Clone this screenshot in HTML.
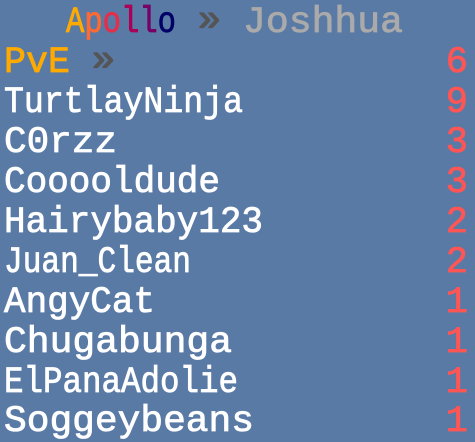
<!DOCTYPE html>
<html><head><style>
html,body{margin:0;padding:0;background:#5a7aa6;width:475px;height:442px;overflow:hidden}
svg{display:block}
text{font-family:"Liberation Mono",monospace;font-size:37px}
</style></head><body>
<svg width="475" height="442" viewBox="0 0 475 442">
<rect width="475" height="442" fill="#5a7aa6"/>
<text x="66" y="32" textLength="110" lengthAdjust="spacingAndGlyphs" stroke-width="0.8"><tspan fill="#ffaa00" stroke="#ffaa00">A</tspan><tspan fill="#ff6a33" stroke="#ff6a33">p</tspan><tspan fill="#e0304d" stroke="#e0304d">o</tspan><tspan fill="#aa0055" stroke="#aa0055">l</tspan><tspan fill="#770066" stroke="#770066">l</tspan><tspan fill="#000066" stroke="#000066">o</tspan></text>
<text x="198" y="30" fill="#555555" stroke="#555555" stroke-width="1.2" font-size="30" textLength="23" lengthAdjust="spacingAndGlyphs">»</text>
<text x="243" y="32" fill="#aaaaaa" stroke="#aaaaaa" stroke-width="0.8" textLength="160" lengthAdjust="spacingAndGlyphs">Joshhua</text>
<text x="4" y="72" fill="#ffaa00" stroke="#ffaa00" stroke-width="0.8" textLength="66" lengthAdjust="spacingAndGlyphs">PvE</text>
<text x="92" y="70" fill="#555555" stroke="#555555" stroke-width="1.2" font-size="30" textLength="23" lengthAdjust="spacingAndGlyphs">»</text>
<g fill="#ffffff" stroke="#ffffff" stroke-width="0.8">
<text x="4" y="112" textLength="239" lengthAdjust="spacingAndGlyphs">TurtlayNinja</text>
<text x="4" y="152" textLength="113" lengthAdjust="spacingAndGlyphs">C0rzz</text>
<text x="4" y="192" textLength="216" lengthAdjust="spacingAndGlyphs">Cooooldude</text>
<text x="4" y="232" textLength="259" lengthAdjust="spacingAndGlyphs">Hairybaby123</text>
<text x="4" y="272" textLength="187" lengthAdjust="spacingAndGlyphs">Juan_Clean</text>
<text x="4" y="312" textLength="151" lengthAdjust="spacingAndGlyphs">AngyCat</text>
<text x="4" y="352" textLength="228" lengthAdjust="spacingAndGlyphs">Chugabunga</text>
<text x="4" y="392" textLength="234" lengthAdjust="spacingAndGlyphs">ElPanaAdolie</text>
<text x="4" y="431" textLength="250" lengthAdjust="spacingAndGlyphs">Soggeybeans</text>
</g>
<g fill="#ff5555" stroke="#ff5555" stroke-width="0.8" text-anchor="end">
<text x="468" y="72">6</text>
<text x="468" y="112">9</text>
<text x="468" y="152">3</text>
<text x="468" y="192">3</text>
<text x="468" y="232">2</text>
<text x="468" y="272">2</text>
<text x="468" y="312">1</text>
<text x="468" y="352">1</text>
<text x="468" y="392">1</text>
<text x="468" y="431">1</text>
</g>
</svg>
</body></html>
